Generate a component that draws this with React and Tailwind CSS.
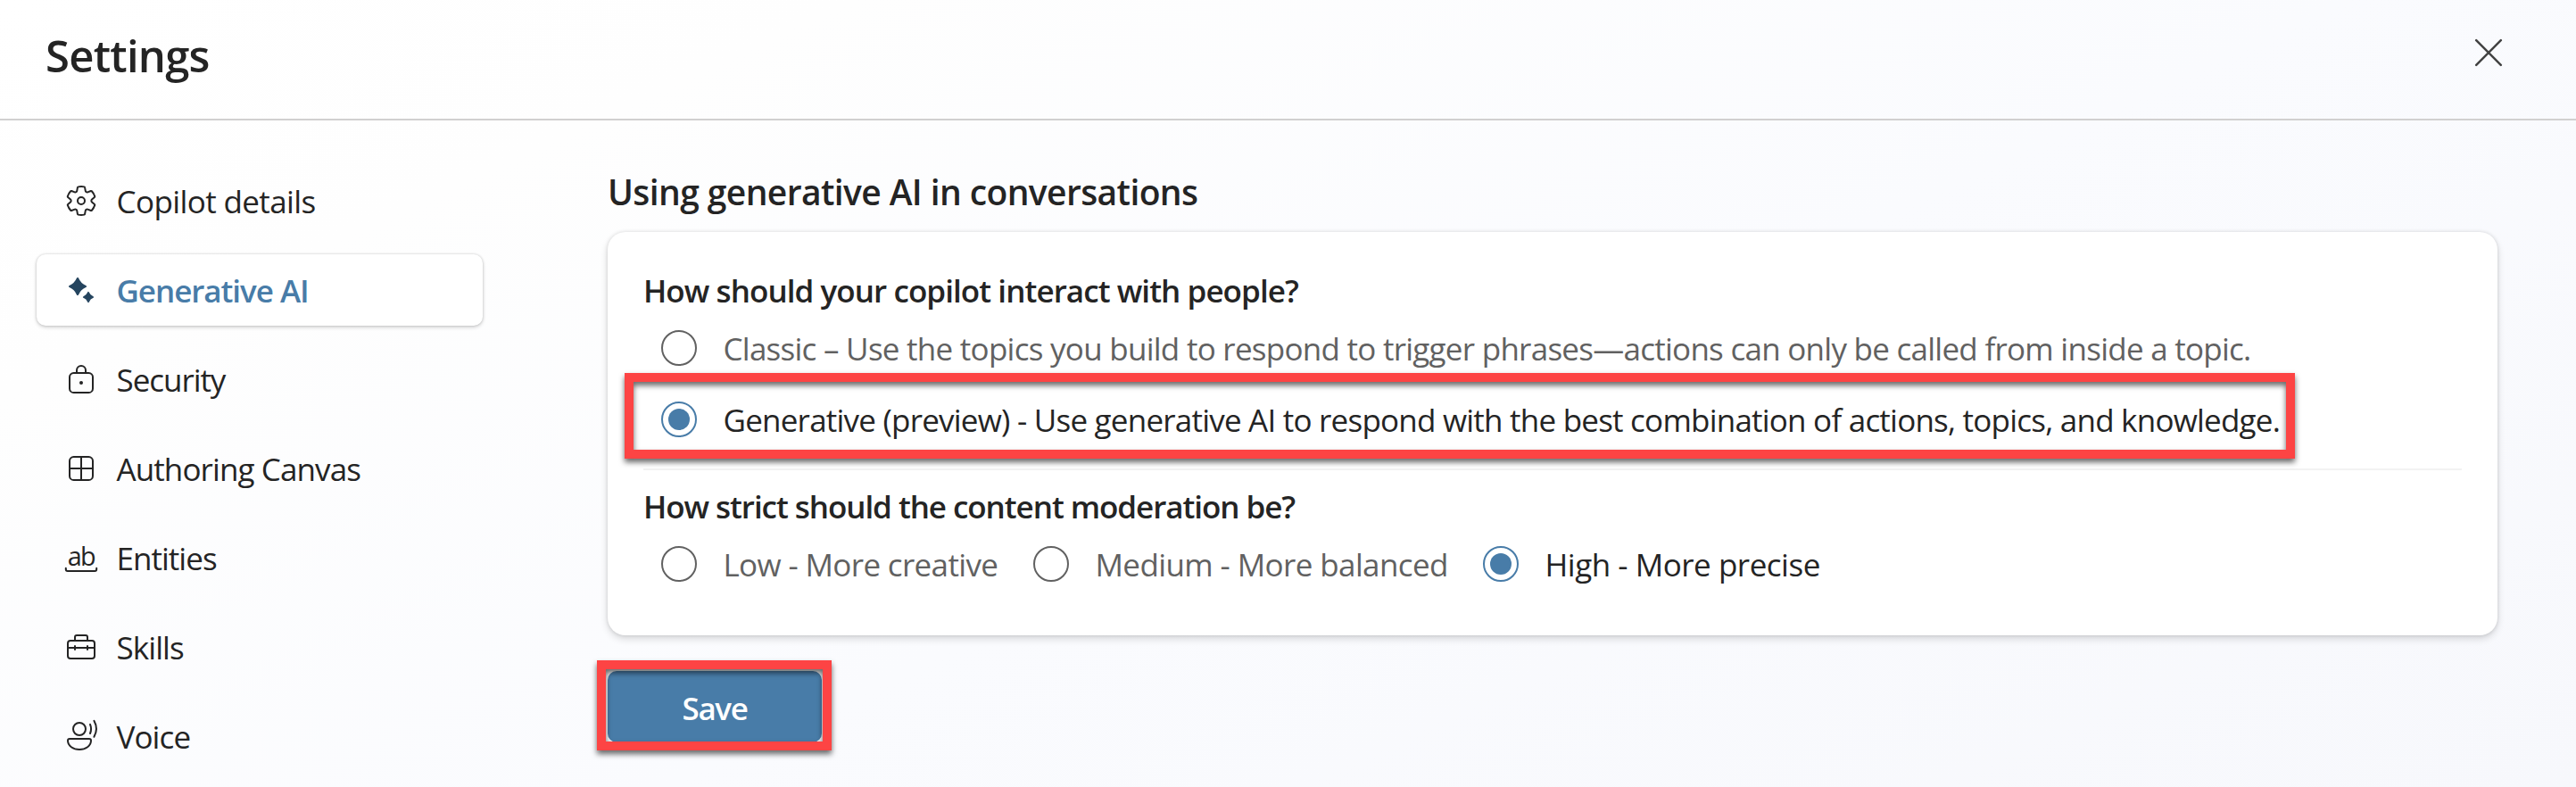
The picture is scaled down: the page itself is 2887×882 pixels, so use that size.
import React from 'react';

const stroke = { fill: 'none', stroke: 'currentColor', strokeLinecap: 'round', strokeLinejoin: 'round' };

function Icon({ children, className = 'text-[#242424]' }) {
  return (
    <svg viewBox="0 0 20 20" className={`size-10 shrink-0 overflow-visible ${className}`} aria-hidden="true">
      {children}
    </svg>
  );
}

const GearIcon = () => (
  <Icon>
    <g {...stroke}>
      <path
        transform="translate(.6 .6) scale(.94)"
        strokeWidth="1.06"
        d="M1.91 7.38A8.5 8.5 0 0 1 3.7 4.3a.5.5 0 0 1 .54-.13l1.92.68a1 1 0 0 0 1.32-.76l.36-2a.5.5 0 0 1 .4-.4 8.53 8.53 0 0 1 3.55 0c.2.04.35.2.38.4l.37 2a1 1 0 0 0 1.32.76l1.92-.68a.5.5 0 0 1 .54.13 8.5 8.5 0 0 1 1.78 3.08c.06.2 0 .4-.15.54l-1.56 1.32a1 1 0 0 0 0 1.52l1.56 1.32a.5.5 0 0 1 .15.54 8.5 8.5 0 0 1-1.78 3.08.5.5 0 0 1-.54.13l-1.92-.68a1 1 0 0 0-1.32.76l-.37 2a.5.5 0 0 1-.38.4 8.53 8.53 0 0 1-3.56 0 .5.5 0 0 1-.39-.4l-.36-2a1 1 0 0 0-1.32-.76l-1.92.68a.5.5 0 0 1-.54-.13 8.5 8.5 0 0 1-1.78-3.08.5.5 0 0 1 .15-.54l1.56-1.32a1 1 0 0 0 0-1.52L2.06 7.92a.5.5 0 0 1-.15-.54Z"
      />
      <circle cx="10" cy="10" r="2" />
    </g>
  </Icon>
);

const SparkleIcon = () => (
  <Icon className="text-[#25455f]">
    <g fill="currentColor" stroke="currentColor" strokeLinejoin="round">
      <path strokeWidth="1.2" d="M8 3.6C9 6 10 7 12.4 8C10 9 9 10 8 12.4C7 10 6 9 3.6 8C6 7 7 6 8 3.6Z" />
      <path strokeWidth=".9" d="M14 11.4C14.6 12.9 15.1 13.4 16.6 14C15.1 14.6 14.6 15.1 14 16.6C13.4 15.1 12.9 14.6 11.4 14C12.9 13.4 13.4 12.9 14 11.4Z" />
    </g>
  </Icon>
);

const LockIcon = () => (
  <Icon>
    <g {...stroke}>
      <rect x="3.5" y="6.5" width="13" height="11" rx="2.3" />
      <path d="M7.5 6.5V5a2.5 2.5 0 0 1 5 0v1.5" />
    </g>
    <circle cx="10" cy="12" r="1" fill="currentColor" />
  </Icon>
);

const GridIcon = () => (
  <Icon>
    <g {...stroke}>
      <rect x="3.5" y="3.5" width="13" height="13" rx="2.3" />
      <path d="M10 3.5v13M3.5 10h13" />
    </g>
  </Icon>
);

const EntitiesIcon = () => (
  <Icon>
    <text x="2.4" y="14.6" textLength="15" className="font-['Open_Sans',sans-serif] text-[14.4px]" fontWeight="400" fill="currentColor">
      ab
    </text>
    <path {...stroke} d="M1.4 15.9v.6a1 1 0 0 0 1 1h15.2a1 1 0 0 0 1-1v-.6" />
  </Icon>
);

const ToolboxIcon = () => (
  <Icon>
    <g {...stroke}>
      <rect x="2.5" y="6.5" width="15" height="10" rx="1.5" />
      <path d="M6.5 6.5v-2a1 1 0 0 1 1-1h5a1 1 0 0 1 1 1v2M2.5 10.5h15M6.5 9.5v2M13.5 9.5v2" />
    </g>
  </Icon>
);

const VoiceIcon = () => (
  <Icon>
    <g {...stroke}>
      <circle cx="9" cy="6" r="3.5" />
      <path d="M3.5 11.5h11a1 1 0 0 1 1 1c0 3-3 5-6.5 5s-6.5-2-6.5-5a1 1 0 0 1 1-1Z" />
      <path d="M15 3.4c.7 1.6.7 3.4 0 5.1M17.2 1.4c1.7 3 1.7 6 0 9" />
    </g>
  </Icon>
);

const NAV = [
  { label: 'Copilot details', icon: GearIcon, tracking: 'tracking-[-0.6px]' },
  { label: 'Generative AI', icon: SparkleIcon, tracking: 'tracking-[-1.05px]', active: true },
  { label: 'Security', icon: LockIcon, tracking: 'tracking-[-1.05px]' },
  { label: 'Authoring Canvas', icon: GridIcon, tracking: 'tracking-[-0.9px]' },
  { label: 'Entities', icon: EntitiesIcon, tracking: 'tracking-[-0.97px]' },
  { label: 'Skills', icon: ToolboxIcon, tracking: 'tracking-[-0.93px]' },
  { label: 'Voice', icon: VoiceIcon, tracking: 'tracking-[-0.9px]' },
];

function NavItem({ label, icon: Glyph, tracking, active }) {
  return (
    <li
      className={`flex h-20 items-center gap-[19.5px] rounded-[10px] pl-[30px] text-[35px] whitespace-nowrap ${tracking} ${
        active
          ? 'bg-white font-semibold text-[#487ca8] shadow-[0_0_3px_rgba(0,0,0,0.18),0_2px_4px_rgba(0,0,0,0.16)]'
          : 'text-[#242424]'
      }`}
    >
      <Glyph />
      <span className="pt-[3px]">{label}</span>
    </li>
  );
}

function Radio({ label, checked, tracking, className = '' }) {
  return (
    <label className={`flex h-10 shrink-0 items-center gap-[29.5px] text-[35px] whitespace-nowrap ${className}`}>
      <span
        className={`flex size-10 shrink-0 items-center justify-center rounded-full border-2 bg-white ${
          checked ? 'border-[#487ca8]' : 'border-[#616161]'
        }`}
      >
        {checked && <span className="size-6 rounded-full bg-[#487ca8]" />}
      </span>
      <span className={`pt-[3px] ${tracking} ${checked ? 'text-[#242424]' : 'text-[#616161]'}`}>{label}</span>
    </label>
  );
}

function Highlight({ className }) {
  return (
    <div
      className={`pointer-events-none absolute border-10 border-[#fd4444] drop-shadow-[0_4px_3px_rgba(0,0,0,0.6)] ${className}`}
    />
  );
}

export default function App() {
  return (
    <div className="flex h-[882px] w-[2887px] flex-col overflow-hidden bg-linear-[155deg,#ffffff_0%,#fefefe_20%,#fafbfe_55%,#f7f8fc_100%] font-['Open_Sans','Noto_Sans',sans-serif] text-[#242424]">
      <header className="flex h-[135px] shrink-0 items-start justify-between border-b-2 border-[#d1d0d0] pt-[30px] pr-[81px] pl-[51px]">
        <h1 className="text-[49px] leading-[64px] font-semibold tracking-[-0.76px]">Settings</h1>
        <button aria-label="Close" className="mt-3">
          <svg viewBox="0 0 34 34" className="size-[34px] text-[#424242]">
            <path d="M3.2 3.2 30.8 30.8M30.8 3.2 3.2 30.8" {...stroke} strokeWidth="2.5" />
          </svg>
        </button>
      </header>

      <div className="flex grow gap-[140px] pl-[41px]">
        <nav className="w-[500px] shrink-0 pt-[50px]">
          <ul className="flex flex-col gap-5">
            {NAV.map((item) => (
              <NavItem key={item.label} {...item} />
            ))}
          </ul>
        </nav>

        <main className="w-[2118px] shrink-0 pt-[55px]">
          <h2 className="text-[39px] leading-[50px] font-semibold tracking-[-0.6px]">
            Using generative AI in conversations
          </h2>

          <section className="mt-5 h-[452px] rounded-[20px] bg-white px-10 pt-[46px] shadow-[0_0_4px_rgba(0,0,0,0.12),0_4px_8px_rgba(0,0,0,0.14)]">
            <h3 className="text-[35px] leading-10 font-semibold tracking-[-0.93px]">
              How should your copilot interact with people?
            </h3>
            <Radio
              className="mt-6 pl-5"
              tracking="tracking-[-0.735px]"
              label="Classic – Use the topics you build to respond to trigger phrases—actions can only be called from inside a topic."
            />
            <div className="relative mt-10">
              <Radio
                checked
                className="pl-5"
                tracking="tracking-[-0.775px]"
                label="Generative (preview) - Use generative AI to respond with the best combination of actions, topics, and knowledge."
              />
              <Highlight className="-top-8 -left-[21px] h-24 w-[1872px]" />
            </div>

            <hr className="mt-[35px] border-t-2 border-[#f2f2f2]" />

            <h3 className="mt-[21px] text-[35px] leading-10 font-semibold tracking-[-1.055px]">
              How strict should the content moderation be?
            </h3>
            <div className="mt-6 flex pl-5">
              <Radio className="w-[417px]" tracking="tracking-[-0.65px]" label="Low - More creative" />
              <Radio className="w-[504px]" tracking="tracking-[-0.61px]" label="Medium - More balanced" />
              <Radio checked tracking="tracking-[-0.48px]" label="High - More precise" />
            </div>
          </section>

          <div className="relative mt-10 w-60">
            <button className="block h-20 w-60 rounded-[10px] bg-[#487ca8] pt-[3px] text-[35px] leading-[70px] font-semibold tracking-[-1.4px] text-white">
              Save
            </button>
            <Highlight className="-top-3 -left-3 h-[101px] w-[263px]" />
          </div>
        </main>
      </div>
    </div>
  );
}
